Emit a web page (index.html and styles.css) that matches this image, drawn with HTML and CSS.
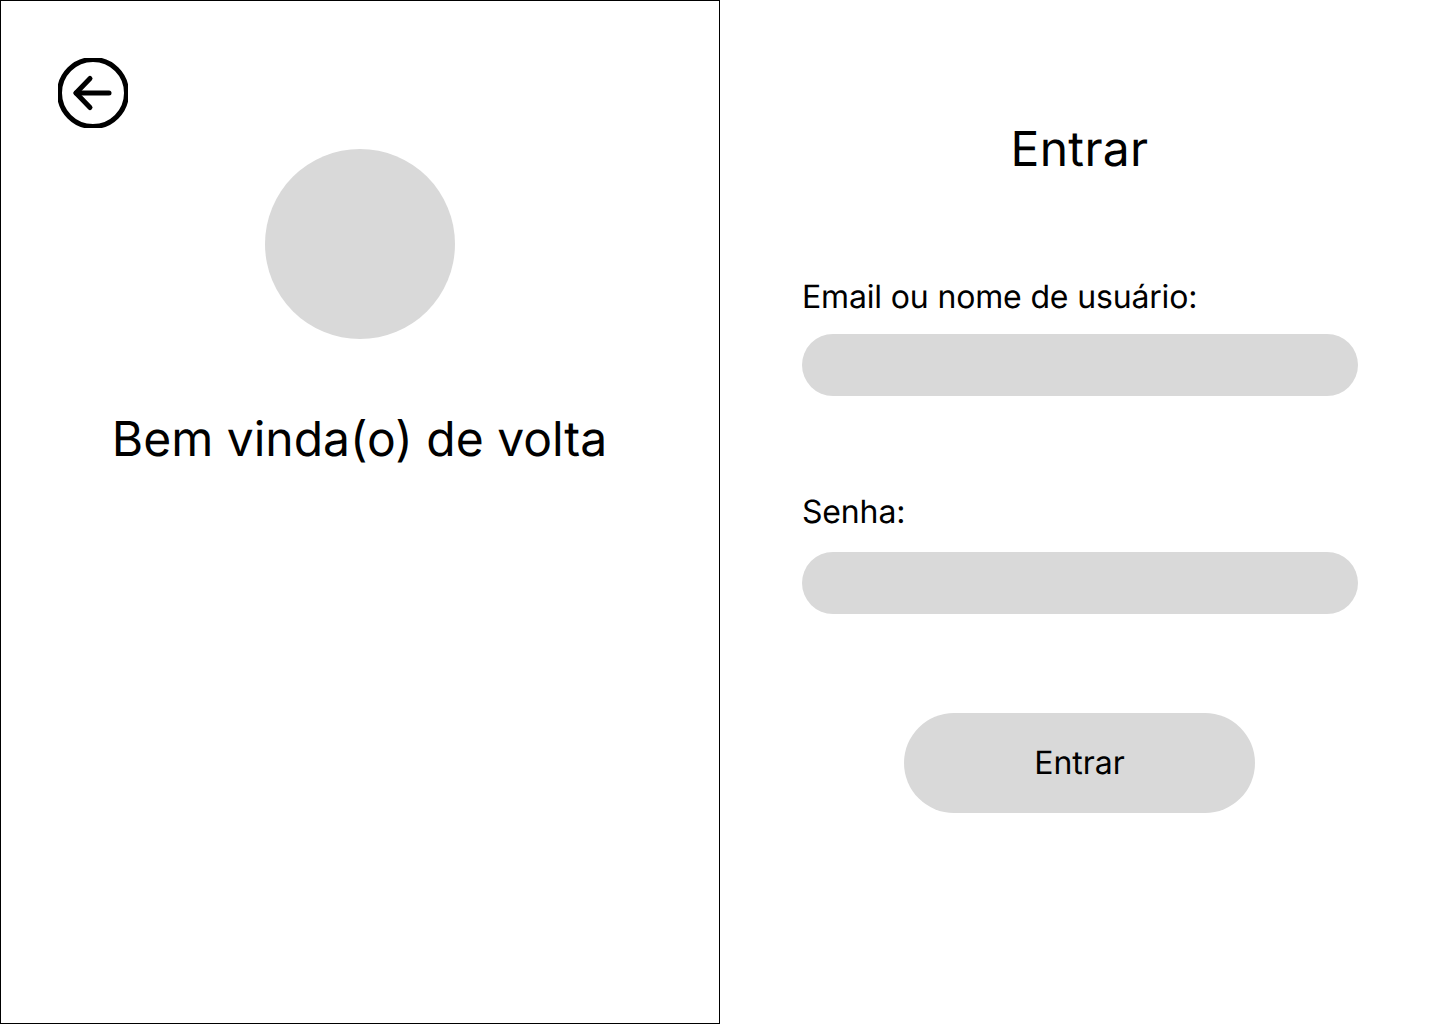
FILE: index.html
```html
<!DOCTYPE html>
<html lang="pt-BR">
<head>
  <meta charset="UTF-8">
  <title>Entrar</title>
  <link rel="stylesheet" href="styles.css">
</head>
<body>
  <div class="page">
    <div class="welcome">
      <div class="back-row">
        <svg class="back-icon" width="70" height="70" viewBox="0 0 70 70" fill="none" stroke="#000" stroke-width="5" stroke-linecap="round" stroke-linejoin="round">
          <circle cx="35" cy="35" r="33.5"/>
          <path d="M32 20.5L18 35L32 49.5"/>
          <path d="M18 35H51"/>
        </svg>
      </div>
      <div class="avatar"></div>
      <div class="welcome-text">Bem vinda(o) de volta</div>
    </div>
    <div class="login">
      <div class="login-title">Entrar</div>
      <div class="field field-first">
        <label class="field-label">Email ou nome de usuário:</label>
        <div class="field-input"></div>
      </div>
      <div class="field field-second">
        <label class="field-label">Senha:</label>
        <div class="field-input field-input-low"></div>
      </div>
      <div class="login-btn">Entrar</div>
    </div>
  </div>
</body>
</html>
```

FILE: styles.css
```css
*{
  box-sizing: border-box;
}
body{
  margin: 0;
  padding: 0;
  background-color: #fff;
  color: #000;
  font-family: Inter, "Liberation Sans", sans-serif;
  text-rendering: geometricPrecision;
}
.page{
  width: 1440px;
  height: 1024px;
  display: flex;
}
.welcome{
  width: 720px;
  height: 1024px;
  border: 1px solid #000;
  display: flex;
  flex-direction: column;
  align-items: center;
}
.back-row{
  width: 100%;
  height: 148px;
  padding: 57px 0 0 57px;
}
.back-icon{
  display: block;
  overflow: hidden;
}
.avatar{
  width: 190px;
  height: 190px;
  border-radius: 50%;
  background-color: #d9d9d9;
}
.welcome-text{
  margin-top: 71px;
  margin-right: 1px;
  font-size: 48px;
  line-height: 58px;
}
.login{
  width: 720px;
  height: 1024px;
  padding-top: 120px;
  display: flex;
  flex-direction: column;
  align-items: center;
}
.login-title{
  margin-right: 1px;
  font-size: 48px;
  line-height: 58px;
  letter-spacing: 0.33px;
}
.field{
  width: 556px;
}
.field-first{
  margin-top: 99px;
}
.field-second{
  margin-top: 96px;
}
.field-label{
  display: block;
  font-size: 32px;
  line-height: 39px;
  letter-spacing: -0.16px;
}
.field-input{
  height: 62px;
  margin-top: 18px;
  border-radius: 31px;
  background-color: #d9d9d9;
}
.field-input-low{
  margin-top: 21px;
}
.login-btn{
  width: 351px;
  height: 100px;
  margin-top: 99px;
  margin-right: 1px;
  padding-bottom: 2px;
  border-radius: 50px;
  background-color: #d9d9d9;
  font-size: 32px;
  display: flex;
  align-items: center;
  justify-content: center;
}
```
